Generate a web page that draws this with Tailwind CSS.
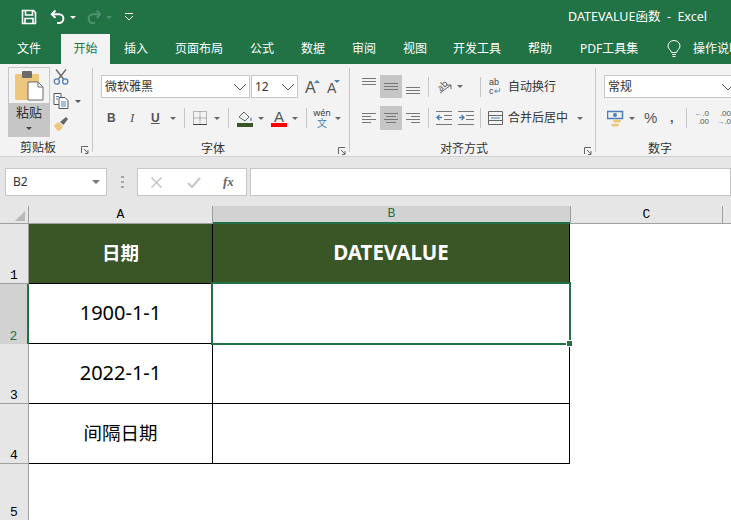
<!DOCTYPE html>
<html lang="zh-CN">
<head>
  <meta charset="UTF-8" />
  <title>DATEVALUE函数 - Excel</title>
  <script src="https://cdn.jsdelivr.net/npm/@tailwindcss/browser@4"></script>
</head>
<body class="w-[731px] h-[520px] overflow-hidden bg-white font-['Noto_Sans','Noto_Sans_CJK_SC',sans-serif] text-[12px] text-[#333]">

  <!-- title bar -->
  <div class="h-[34px] bg-[#217346] flex items-center text-white">
    <svg class="ml-[21px] w-[16px] h-[16px]" viewBox="0 0 16 16" fill="none" stroke="#fff" stroke-width="1.6"><path d="M1.5 1.5h11l2 2v11h-13z"/><path d="M4.5 1.5v4.500h7v-4.500"/><path d="M4 14.500v-5h8v5"/></svg>
    <svg class="ml-[13px] w-[16px] h-[16px]" viewBox="0 0 16 16" fill="none" stroke="#fff" stroke-width="2"><path d="M5.500 1.500 1.800 5.200l3.700 3.700"/><path d="M2 5.200h7a4.400 4.400 0 0 1 0 8.800H7"/></svg>
    <div class="ml-[4px] w-0 h-0 border-x-[3px] border-t-[3px] border-x-transparent border-t-white"></div>
    <svg class="ml-[10px] w-[16px] h-[16px]" viewBox="0 0 16 16" fill="none" stroke="#4f9272" stroke-width="2"><path d="M10.500 1.500l3.700 3.700-3.700 3.700"/><path d="M14 5.200H7a4.400 4.400 0 0 0 0 8.800h2"/></svg>
    <div class="ml-[4px] w-0 h-0 border-x-[3px] border-t-[3px] border-x-transparent border-t-[#4f9272]"></div>
    <svg class="ml-[12px] w-[10px] h-[10px]" viewBox="0 0 10 10" fill="none" stroke="#fff"><path d="M1 1.500h8"/><path d="M1 4l4 4 4-4"/></svg>
    <span class="ml-[434px] text-[12.500px] whitespace-pre">DATEVALUE函数  -  Excel</span>
  </div>

  <!-- tabs -->
  <div class="h-[30px] bg-[#217346] flex items-center text-white whitespace-nowrap overflow-hidden *:shrink-0">
    <span class="ml-[17px] w-[24px]">文件</span>
    <span class="ml-[20px] w-[49px] h-[30px] bg-[#f3f3f3] text-[#217346] flex items-center justify-center">开始</span>
    <span class="ml-[14px] w-[24px]">插入</span>
    <span class="ml-[27px] w-[48px]">页面布局</span>
    <span class="ml-[27px] w-[24px]">公式</span>
    <span class="ml-[27px] w-[24px]">数据</span>
    <span class="ml-[27px] w-[24px]">审阅</span>
    <span class="ml-[27px] w-[24px]">视图</span>
    <span class="ml-[26px] w-[48px]">开发工具</span>
    <span class="ml-[27px] w-[24px]">帮助</span>
    <span class="ml-[28px] w-[58px]">PDF工具集</span>
    <svg class="ml-[29px] w-[14px] h-[18px]" viewBox="0 0 14 18" fill="none" stroke="#fff"><path d="M4.500 12.500C4 10 1 9 1 6a6 5.500 0 0 1 12 0c0 3-3 4-3.500 6.500z"/><path d="M5 14.500h4M5.500 16.500h3"/></svg>
    <span class="ml-[12px]">操作说明搜索</span>
  </div>

  <!-- ribbon -->
  <div class="h-[93px] bg-[#f3f3f3] border-b border-[#d2d2d2] flex overflow-hidden">

    <!-- clipboard -->
    <div class="w-[92px] shrink-0 flex flex-col">
      <div class="flex h-[70px] mt-[3px] shrink-0">
        <div class="ml-[8px] w-[42px] flex flex-col border border-[#c6c6c6]">
          <div class="h-[35px] flex items-center justify-center">
            <svg class="w-[30px] h-[32px]" viewBox="0 0 30 32"><rect x="1" y="4" width="24" height="26" rx="1" fill="#eec77f"/><rect x="8" y="1" width="10" height="7" rx="1" fill="#6b6b6b"/><path d="M14 12h10l5 5v13H14z" fill="#fff" stroke="#6b6b6b"/><path d="M24 12v5h5" fill="none" stroke="#6b6b6b"/></svg>
          </div>
          <div class="flex-1 bg-[#c6c6c6] flex flex-col items-center pt-[1px] text-[13px] leading-[17px]">
            <span>粘贴</span>
            <div class="mt-[6px] w-0 h-0 border-x-[3px] border-t-[3px] border-x-transparent border-t-[#444]"></div>
          </div>
        </div>
        <div class="ml-[3px] flex flex-col">
          <svg class="mt-[2px] w-[16px] h-[16px]" viewBox="0 0 16 16" fill="none"><path d="M3 0.500 10.500 10M13 0.500 5.500 10" stroke="#666" stroke-width="1.300"/><circle cx="3.800" cy="12.500" r="2.600" stroke="#4a7fb5" stroke-width="1.300"/><circle cx="12.200" cy="12.500" r="2.600" stroke="#4a7fb5" stroke-width="1.300"/></svg>
          <div class="mt-[8px] flex items-center">
            <svg class="w-[16px] h-[16px]" viewBox="0 0 16 16" fill="#fff" stroke="#555"><path d="M1 .5h7v11H1z"/><path d="M6 4.500h6l3 3v8H6z"/><path d="M3 3.500h3M3 6h2M8 9h5M8 11h5M8 13h5" stroke="#4a7fb5"/></svg>
            <div class="ml-[6px] w-0 h-0 border-x-[3px] border-t-[3px] border-x-transparent border-t-[#555]"></div>
          </div>
          <svg class="mt-[7px] w-[16px] h-[16px]" viewBox="0 0 16 16"><path d="M1 9l5-3 4 5-3.500 4C4 15 2 12 1 9z" fill="#eec77f"/><path d="M7 6l6-5 2 2-4.500 6z" fill="#666"/></svg>
        </div>
      </div>
      <div class="flex items-center h-[20px] mt-[1px] shrink-0">
        <span class="ml-[20px] w-[36px]">剪贴板</span>
        <svg class="ml-[25px] mt-[3px] w-[8px] h-[8px]" viewBox="0 0 8 8" fill="none" stroke="#666"><path d="M.5 7V.5H7M3 3l4 4M7 4v3.500H4"/></svg>
      </div>
    </div>
    <div class="w-px bg-[#c6c6c6] my-[4px] shrink-0"></div>

    <!-- font -->
    <div class="w-[256px] shrink-0 flex flex-col pt-[11px]">
      <div class="flex h-[23px] shrink-0">
        <div class="ml-[8px] w-[149px] border border-[#c6c6c6] bg-white flex items-center justify-between pl-[3px] pr-[2px]">
          <span>微软雅黑</span>
          <svg class="w-[14px] h-[8px]" viewBox="0 0 14 8" fill="none" stroke="#555"><path d="M1 1l6 6 6-6"/></svg>
        </div>
        <div class="ml-[1px] w-[47px] border border-[#c6c6c6] bg-white flex items-center justify-between pl-[3px] pr-[2px]">
          <span>12</span>
          <svg class="w-[14px] h-[8px]" viewBox="0 0 14 8" fill="none" stroke="#555"><path d="M1 1l6 6 6-6"/></svg>
        </div>
        <div class="ml-[7px] w-[14px] flex items-start font-['Liberation_Sans'] text-[16px] leading-[26px] text-[#555]"><span>A</span><div class="mt-[5px] ml-[-2px] w-0 h-0 border-x-[3px] border-b-[3px] border-x-transparent border-b-[#4a7fb5]"></div></div>
        <div class="ml-[8px] w-[14px] flex items-start font-['Liberation_Sans'] text-[14px] leading-[27px] text-[#555]"><span>A</span><div class="mt-[5px] ml-[-2px] w-0 h-0 border-x-[3px] border-t-[3px] border-x-transparent border-t-[#4a7fb5]"></div></div>
      </div>
      <div class="flex items-center h-[24px] mt-[8px] shrink-0 text-[#555]">
        <b class="ml-[14px] w-[8px] font-['Liberation_Sans'] text-[12px]">B</b>
        <i class="ml-[15px] w-[6px] font-['Liberation_Serif'] text-[13px]">I</i>
        <u class="ml-[15px] w-[9px] font-['Liberation_Sans'] text-[12px] font-bold">U</u>
        <div class="ml-[10px] w-0 h-0 border-x-[3px] border-t-[3px] border-x-transparent border-t-[#666]"></div>
        <div class="ml-[8px] w-px h-[20px] bg-[#c6c6c6]"></div>
        <svg class="ml-[8px] w-[14px] h-[14px]" viewBox="0 0 14 14" fill="none" stroke="#777" stroke-dasharray="1 1"><path d="M.5.5h13v13H.5zM7 .5v13M.5 7h13"/><path d="M0 13.500h14" stroke-dasharray="none" stroke="#444"/></svg>
        <div class="ml-[7px] w-0 h-0 border-x-[3px] border-t-[3px] border-x-transparent border-t-[#666]"></div>
        <div class="ml-[8px] w-px h-[20px] bg-[#c6c6c6]"></div>
        <div class="ml-[8px] w-[16px] flex flex-col items-center">
          <svg class="w-[16px] h-[13px]" viewBox="0 0 16 13" fill="none"><path d="M2 7l5-5 5 5-4 4z" stroke="#666"/><path d="M14 7c1 2 1 4 0 4s-1-2 0-4z" fill="#4a7fb5"/></svg>
          <div class="w-[16px] h-[4px] bg-[#3a5526]"></div>
        </div>
        <div class="ml-[5px] w-0 h-0 border-x-[3px] border-t-[3px] border-x-transparent border-t-[#666]"></div>
        <div class="ml-[7px] w-[16px] flex flex-col items-center">
          <span class="font-['Liberation_Sans'] text-[15px] leading-[13px] h-[13px]">A</span>
          <div class="w-[16px] h-[4px] bg-[#ff0000]"></div>
        </div>
        <div class="ml-[5px] w-0 h-0 border-x-[3px] border-t-[3px] border-x-transparent border-t-[#666]"></div>
        <div class="ml-[8px] w-px h-[20px] bg-[#c6c6c6]"></div>
        <div class="ml-[7px] w-[16px] flex flex-col items-center">
          <span class="text-[9px] leading-[10px] text-[#444]">wén</span>
          <span class="text-[10px] leading-[10px] text-[#4a7fb5]">文</span>
        </div>
        <div class="ml-[5px] w-0 h-0 border-x-[3px] border-t-[3px] border-x-transparent border-t-[#666]"></div>
      </div>
      <div class="flex items-center h-[20px] mt-[9px] shrink-0">
        <span class="ml-[108px] w-[24px]">字体</span>
        <svg class="ml-[113px] mt-[3px] w-[8px] h-[8px]" viewBox="0 0 8 8" fill="none" stroke="#666"><path d="M.5 7V.5H7M3 3l4 4M7 4v3.500H4"/></svg>
      </div>
    </div>
    <div class="w-px bg-[#c6c6c6] my-[4px] shrink-0"></div>

    <!-- alignment -->
    <div class="w-[245px] shrink-0 flex flex-col pt-[11px]">
      <div class="flex items-center h-[23px] shrink-0">
        <svg class="ml-[12px] w-[14px] h-[23px]" viewBox="0 0 14 23" stroke="#777"><path d="M0 3.500h14M0 6.500h14M0 9.500h14"/></svg>
        <div class="ml-[4px] w-[22px] h-[23px] bg-[#c6c6c6] flex items-center justify-center"><svg class="w-[14px] h-[8px]" viewBox="0 0 14 8" stroke="#777"><path d="M0 .5h14M0 3.500h14M0 6.500h14"/></svg></div>
        <svg class="ml-[4px] w-[14px] h-[23px]" viewBox="0 0 14 23" stroke="#777"><path d="M0 12.500h14M0 15.500h14M0 18.500h14"/></svg>
        <div class="ml-[8px] w-px h-[20px] bg-[#c6c6c6]"></div>
        <div class="ml-[7px] w-[16px] h-[18px] relative shrink-0">
          <span class="block -rotate-45 text-[9px] leading-[9px] text-[#555] mt-[1px]">ab</span>
          <svg class="absolute left-0 top-0 w-[16px] h-[18px]" viewBox="0 0 16 18" fill="none" stroke="#666"><path d="M4 15 15 7M10 7h5v4"/></svg>
        </div>
        <div class="ml-[5px] w-0 h-0 border-x-[3px] border-t-[3px] border-x-transparent border-t-[#666]"></div>
        <div class="ml-[17px] w-px h-[20px] bg-[#c6c6c6]"></div>
        <span class="ml-[8px] w-[14px] shrink-0 text-[9px] leading-[9px] text-[#444] font-['Liberation_Sans']">ab<br>c<span class="text-[#4a7fb5]">↵</span></span>
        <span class="ml-[5px]">自动换行</span>
      </div>
      <div class="flex items-center h-[24px] mt-[8px] shrink-0">
        <svg class="ml-[12px] w-[14px] h-[11px]" viewBox="0 0 14 11" stroke="#777"><path d="M0 .5h14M0 3.500h9M0 6.500h14M0 9.500h9"/></svg>
        <div class="ml-[4px] w-[22px] h-[24px] bg-[#c6c6c6] flex items-center justify-center"><svg class="w-[14px] h-[11px]" viewBox="0 0 14 11" stroke="#777"><path d="M0 .5h14M2 3.500h10M0 6.500h14M2 9.500h10"/></svg></div>
        <svg class="ml-[4px] w-[14px] h-[11px]" viewBox="0 0 14 11" stroke="#777"><path d="M0 .5h14M5 3.500h9M0 6.500h14M5 9.500h9"/></svg>
        <div class="ml-[8px] w-px h-[20px] bg-[#c6c6c6]"></div>
        <svg class="ml-[7px] w-[16px] h-[14px]" viewBox="0 0 16 14" fill="none"><path d="M0 .5h16M8 4.500h8M8 8.500h8M0 13.500h16" stroke="#777"/><path d="M6 6.500H1M3.500 4l-2.500 2.500L3.500 9" stroke="#4a7fb5" stroke-width="1.300"/></svg>
        <svg class="ml-[6px] w-[16px] h-[14px]" viewBox="0 0 16 14" fill="none"><path d="M0 .5h16M8 4.500h8M8 8.500h8M0 13.500h16" stroke="#777"/><path d="M1 6.500h5M3.500 4l2.500 2.500L3.500 9" stroke="#4a7fb5" stroke-width="1.300"/></svg>
        <div class="ml-[6px] w-px h-[20px] bg-[#c6c6c6]"></div>
        <svg class="ml-[7px] w-[15px] h-[14px]" viewBox="0 0 15 14" fill="none" stroke="#666"><path d="M.5.5h14v13H.5zM0 4.500h15M0 9.500h15"/><path d="M3 7h9" stroke="#4a7fb5"/></svg>
        <span class="ml-[5px] w-[60px]">合并后居中</span>
        <div class="ml-[9px] w-0 h-0 border-x-[3px] border-t-[3px] border-x-transparent border-t-[#666]"></div>
      </div>
      <div class="flex items-center h-[20px] mt-[9px] shrink-0">
        <span class="ml-[90px] w-[48px]">对齐方式</span>
        <svg class="ml-[96px] mt-[3px] w-[8px] h-[8px]" viewBox="0 0 8 8" fill="none" stroke="#666"><path d="M.5 7V.5H7M3 3l4 4M7 4v3.500H4"/></svg>
      </div>
    </div>
    <div class="w-px bg-[#c6c6c6] my-[4px] shrink-0"></div>

    <!-- number -->
    <div class="flex-1 flex flex-col pt-[11px]">
      <div class="flex h-[23px] shrink-0">
        <div class="ml-[8px] w-[140px] shrink-0 border border-[#c6c6c6] bg-white flex items-center pl-[3px]">
          <span class="w-[113px]">常规</span>
          <svg class="w-[14px] h-[8px]" viewBox="0 0 14 8" fill="none" stroke="#555"><path d="M1 1l6 6 6-6"/></svg>
        </div>
      </div>
      <div class="flex items-center h-[24px] mt-[8px] shrink-0 text-[#555]">
        <svg class="ml-[11px] w-[17px] h-[17px]" viewBox="0 0 17 17" fill="none"><path d="M.5 1.500h15v7H.5z" stroke="#4a7fb5" stroke-width="1.500"/><circle cx="8" cy="5" r="2" fill="#4a7fb5"/><ellipse cx="10" cy="11" rx="4" ry="1.500" fill="#eec77f"/><ellipse cx="8" cy="15" rx="4" ry="1.500" fill="#eec77f"/></svg>
        <div class="ml-[5px] w-0 h-0 border-x-[3px] border-t-[3px] border-x-transparent border-t-[#666]"></div>
        <span class="ml-[9px] w-[13px] text-[15px] font-['Liberation_Sans']">%</span>
        <b class="ml-[13px] w-[4px] font-['Liberation_Sans'] text-[13px]">,</b>
        <div class="ml-[12px] w-px h-[20px] bg-[#c6c6c6]"></div>
        <div class="ml-[7px] w-[15px] text-[8px] leading-[8px] font-['Liberation_Sans'] text-right"><span class="text-[#4a7fb5]">←</span>.0<br>.00</div>
        <div class="ml-[7px] w-[15px] text-[8px] leading-[8px] font-['Liberation_Sans'] text-right">.00<br><span class="text-[#4a7fb5]">→</span>.0</div>
      </div>
      <div class="flex items-center h-[20px] mt-[9px] shrink-0">
        <span class="ml-[52px]">数字</span>
      </div>
    </div>
  </div>

  <!-- formula bar -->
  <div class="h-[49px] bg-[#e6e6e6] flex items-center pt-[1px]">
    <div class="ml-[5px] w-[102px] h-[28px] border border-[#c6c6c6] bg-white flex items-center justify-between pl-[7px] pr-[6px]">
      <span>B2</span>
      <div class="w-0 h-0 border-x-[4px] border-t-[4px] border-x-transparent border-t-[#777]"></div>
    </div>
    <div class="ml-[14px] w-[3px] h-[12px] flex flex-col justify-between">
      <div class="h-[2px] bg-[#a6a6a6]"></div><div class="h-[2px] bg-[#a6a6a6]"></div><div class="h-[2px] bg-[#a6a6a6]"></div>
    </div>
    <div class="ml-[13px] w-[110px] h-[28px] border border-[#c6c6c6] bg-white flex items-center">
      <svg class="ml-[13px] w-[11px] h-[11px]" viewBox="0 0 11 11" stroke="#c6c6c6" stroke-width="1.500"><path d="M.5.5l10 10M10.500.5l-10 10"/></svg>
      <svg class="ml-[25px] w-[14px] h-[11px]" viewBox="0 0 14 11" fill="none" stroke="#c6c6c6" stroke-width="2"><path d="M1 6l4 4 8-9"/></svg>
      <i class="ml-[22px] font-['Liberation_Serif'] text-[13px] font-bold text-[#666]">fx</i>
    </div>
    <div class="ml-[3px] flex-1 h-[28px] border border-[#c6c6c6] bg-white"></div>
  </div>

  <!-- sheet -->
  <div class="relative h-[314px] grid grid-cols-[29px_184px_357px_153px_8px] grid-rows-[18px_60px_60px_60px_60px_56px] text-black">
    <div class="bg-[#e6e6e6] border-r border-b border-[#9f9f9f] flex items-end justify-end pr-[3px] pb-[2px]">
      <div class="w-0 h-0 border-l-[10px] border-l-transparent border-b-[10px] border-b-[#b8b8b8]"></div>
    </div>
    <div class="bg-[#e6e6e6] border-r border-b border-[#9f9f9f] flex items-center justify-center font-['Liberation_Mono'] text-[13px]">A</div>
    <div class="bg-[#d2d2d2] border-b-2 border-[#217346] flex items-center justify-center font-['Liberation_Mono'] text-[13px] text-[#217346]">B</div>
    <div class="bg-[#e6e6e6] border-l border-r border-b border-[#9f9f9f] flex items-center justify-center font-['Liberation_Mono'] text-[13px]">C</div>
    <div class="bg-[#e6e6e6] border-b border-[#9f9f9f]"></div>

    <div class="bg-[#e6e6e6] border-r border-b border-[#9f9f9f] flex items-end justify-center font-['Liberation_Mono'] text-[13px] leading-[14px]">1</div>
    <div class="bg-[#3a5526] border-r border-b border-black flex items-center justify-center pb-[2px] text-white font-bold text-[18.500px]">日期</div>
    <div class="bg-[#3a5526] border-r border-b border-black flex items-center justify-center pb-[2px] text-white font-bold text-[20.500px]">DATEVALUE</div>
    <div></div><div></div>

    <div class="bg-[#d2d2d2] border-r-2 border-[#217346] flex items-end justify-center font-['Liberation_Mono'] text-[13px] leading-[14px] text-[#217346]">2</div>
    <div class="border-r border-b border-black flex items-center justify-center pb-[2px] text-[20px]">1900-1-1</div>
    <div class="border-r border-b border-black"></div>
    <div></div><div></div>

    <div class="bg-[#e6e6e6] border-r border-b border-[#9f9f9f] flex items-end justify-center font-['Liberation_Mono'] text-[13px] leading-[14px]">3</div>
    <div class="border-r border-b border-black flex items-center justify-center pb-[2px] text-[20px]">2022-1-1</div>
    <div class="border-r border-b border-black"></div>
    <div></div><div></div>

    <div class="bg-[#e6e6e6] border-r border-b border-[#9f9f9f] flex items-end justify-center font-['Liberation_Mono'] text-[13px] leading-[14px]">4</div>
    <div class="border-r border-b border-black flex items-center justify-center pb-[2px] text-[18.500px]">间隔日期</div>
    <div class="border-r border-b border-black"></div>
    <div></div><div></div>

    <div class="bg-[#e6e6e6] border-r border-[#9f9f9f] flex items-end justify-center font-['Liberation_Mono'] text-[13px] leading-[14px]">5</div>
    <div></div><div></div><div></div><div></div>

    <!-- selected cell -->
    <div class="absolute left-[211px] top-[76px] w-[360px] h-[63px] border-2 border-[#217346]"></div>
    <div class="absolute left-[566px] top-[134px] w-[7px] h-[7px] bg-[#217346] border border-white"></div>
  </div>

</body>
</html>
